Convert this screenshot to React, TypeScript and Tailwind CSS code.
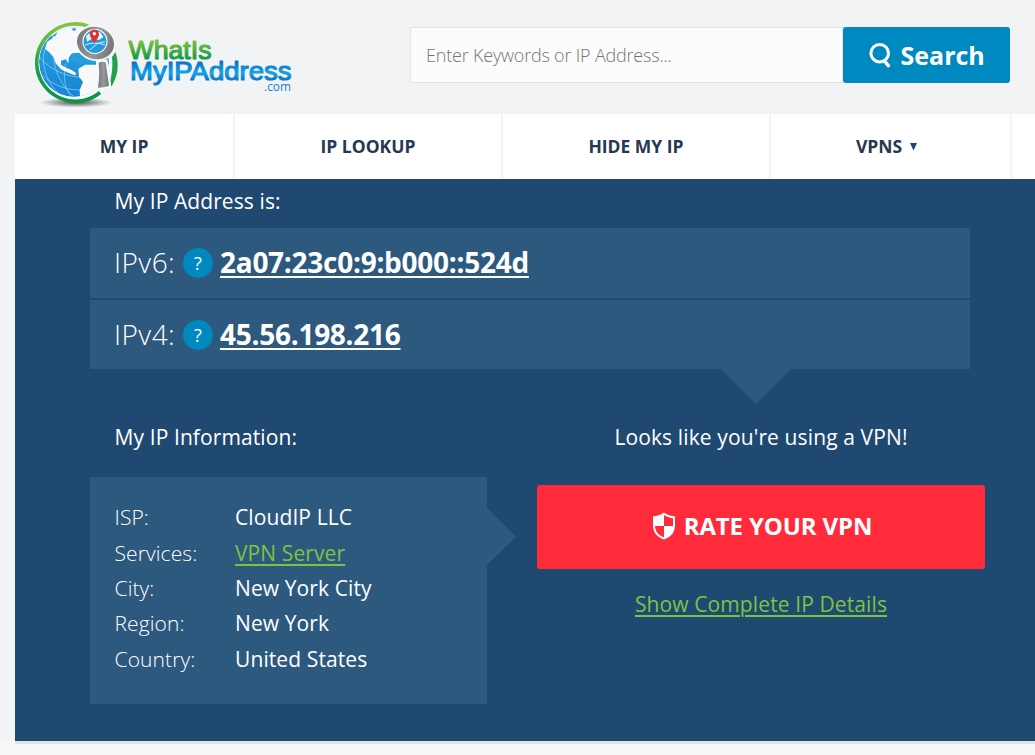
import React from "react";

const navItems = [
  { label: "MY IP", width: "w-[220px]", pad: "pr-0" },
  { label: "IP LOOKUP", width: "w-[268px]", pad: "pr-0" },
  { label: "HIDE MY IP", width: "w-[268px]", pad: "pr-0" },
  { label: "VPNS", width: "w-[241px]", pad: "pr-2", caret: true },
];

const addresses = [
  { label: "IPv6:", value: "2a07:23c0:9:b000::524d", height: "h-[70px]" },
  { label: "IPv4:", value: "45.56.198.216", height: "h-[69px]" },
];

const details = [
  { label: "ISP:", value: "CloudIP LLC", row: "h-[36px]" },
  { label: "Services:", value: "VPN Server", row: "h-[35px]", link: true },
  { label: "City:", value: "New York City", row: "h-[35px]" },
  { label: "Region:", value: "New York", row: "h-[36px]" },
  { label: "Country:", value: "United States", row: "h-[35px]" },
];

function Logo() {
  return (
    <svg width="285" height="110" viewBox="0 0 285 110" className="block shrink-0">
      <defs>
        <linearGradient id="ring" x1="0" y1="0" x2="0" y2="1">
          <stop offset="0" stopColor="#84c441" />
          <stop offset="0.6" stopColor="#189f48" />
          <stop offset="1" stopColor="#0a9444" />
        </linearGradient>
        <linearGradient id="ocean" x1="0" y1="0" x2="0" y2="1">
          <stop offset="0" stopColor="#2aa7e6" />
          <stop offset="1" stopColor="#1585d3" />
        </linearGradient>
        <linearGradient id="metal" x1="0" y1="0" x2="1" y2="0">
          <stop offset="0" stopColor="#77797c" />
          <stop offset="0.5" stopColor="#96989b" />
          <stop offset="1" stopColor="#737578" />
        </linearGradient>
        <linearGradient id="greenText" gradientUnits="userSpaceOnUse" x1="0" y1="39" x2="0" y2="59">
          <stop offset="0" stopColor="#86c440" />
          <stop offset="1" stopColor="#129a47" />
        </linearGradient>
        <linearGradient id="blueText" gradientUnits="userSpaceOnUse" x1="0" y1="61" x2="0" y2="86">
          <stop offset="0" stopColor="#0b6dbd" />
          <stop offset="0.48" stopColor="#12a3e6" />
          <stop offset="0.8" stopColor="#0b70c0" />
          <stop offset="1" stopColor="#1288d2" />
        </linearGradient>
        <radialGradient id="shadow">
          <stop offset="0" stopColor="#333" stopOpacity="0.85" />
          <stop offset="1" stopColor="#333" stopOpacity="0" />
        </radialGradient>
        <clipPath id="globe">
          <circle cx="147" cy="156" r="105" />
        </clipPath>
      </defs>
      <ellipse cx="61" cy="102.500" rx="36" ry="5" fill="url(#shadow)" />
      <circle cx="60.4" cy="62.6" r="39.5" fill="#f7f9fa" />
      <g transform="translate(10 10) scale(.33333)">
        <g clipPath="url(#globe)">
          <circle cx="147" cy="156" r="105" fill="url(#ocean)" />
          <g fill="none" stroke="#8fd0f2" strokeWidth="2.2">
            <path d="M42 140C80 185 140 210 215 200M52 195C95 235 150 248 200 235M88 95C75 150 100 225 150 262M122 160C112 205 122 240 140 262M62 115C45 150 60 215 105 255" />
          </g>
          <path
            d="M60 116L66 96L84 84L78 70L100 44L140 40L185 48L170 80L160 105L164 128L142 130L132 142L130 160L122 148L108 152L108 164L120 172L140 180L154 190L150 196L130 188L108 178L92 160L86 142L74 128Z"
            fill="#f7f9fa"
          />
          <path d="M160 176L180 164L214 164L250 168L262 230L205 268L165 262L164 240L174 216L162 200Z" fill="#f7f9fa" />
          <path d="M136 134L156 128L168 140L186 148L212 151L212 160L180 158L166 166L152 156L140 158Z" fill="#279edd" />
          <path d="M76 82L98 66L92 78ZM140 56L150 54L154 60L146 63Z" fill="#2a9fe0" />
        </g>
      </g>
      <path d="M73.3 26.1A38.700 38.700 0 1 0 85 92.500" fill="none" stroke="url(#ring)" strokeWidth="3.600" />
      <path d="M95.500 88A42 42 0 0 0 100.500 52L97 57C98.200 68 96.500 78 93 88Z" fill="#20a14a" />
      <path d="M81 60L92.500 59.500L96.500 88L81.500 90.500Z" fill="#f8f9fa" />
      <path d="M83.600 62.800Q87 61 90.700 62.300L94 86Q89 87.700 83 87.700Q85 74 83.600 62.800Z" fill="url(#metal)" />
      <ellipse cx="80.500" cy="43" rx="20.500" ry="18" fill="#f5f7f8" transform="rotate(16 80.500 43)" />
      <ellipse cx="80.500" cy="43" rx="18.700" ry="16" fill="url(#metal)" transform="rotate(16 80.500 43)" />
      <circle cx="80" cy="41.300" r="12.600" fill="#f4f7f9" />
      <circle cx="80" cy="41.500" r="11.400" fill="#2499dc" />
      <path d="M71 36Q77 30 85 32L88.500 37L84 40L77 38.500L72 42Z" fill="#dff1fa" />
      <path d="M70 45Q80 41 90 45M75 50Q83 41 90 42" fill="none" stroke="#d4effc" strokeWidth="1" />
      <path d="M79.500 43.500C77.500 39 74.800 37.500 74.800 34A4.600 4.600 0 0 1 84 34C84 37.500 81.500 39 79.500 43.500Z" fill="#e4322b" />
      <circle cx="79.300" cy="33.800" r="1.700" fill="#fff" />
      <text x="113.5" y="58.5" fontFamily="Liberation Sans, Arial, sans-serif" fontSize="25.5" fill="url(#greenText)" stroke="url(#greenText)" strokeWidth="1.1" strokeLinejoin="round" textLength="83" lengthAdjust="spacingAndGlyphs">WhatIs</text>
      <text x="115" y="80" fontFamily="Liberation Sans, Arial, sans-serif" fontSize="25" fill="url(#blueText)" stroke="url(#blueText)" strokeWidth="1.1" strokeLinejoin="round" textLength="161.500" lengthAdjust="spacingAndGlyphs">MyIPAddress</text>
      <text x="249" y="91" fontFamily="Open Sans, sans-serif" fontSize="12" fill="#147fc5" textLength="27" lengthAdjust="spacingAndGlyphs">.com</text>
    </svg>
  );
}

function HelpBadge() {
  return (
    <span className="ml-2 mr-[7px] flex size-[30px] shrink-0 items-center justify-center rounded-full bg-[#0089c0] text-[18px] leading-none text-white">
      ?
    </span>
  );
}

export default function App() {
  return (
    <div className="h-[755px] w-[1035px] overflow-hidden bg-[#f7f7f7] font-['Open_Sans',sans-serif]">
      <div className="bg-[#f1f3f5] pl-[15px]">
        <header className="flex h-[114px] items-start">
          <Logo />
          <form className="ml-[110px] mt-[27px] flex h-14 w-[600px]">
            <input
              placeholder="Enter Keywords or IP Address..."
              className="h-14 w-[433px] border border-[#e4e4e4] bg-[#fcfcfc] px-[15px] text-[18px] font-light tracking-[-0.2px] text-black outline-none placeholder:text-[#757575]"
            />
            <button
              type="button"
              className="flex h-14 w-[167px] items-center rounded-[3px] bg-[#0089c0] pl-[26px] text-[25px] font-bold text-white"
            >
              <svg width="24" height="28" viewBox="0 0 24 28" fill="none" stroke="#fff" className="mr-[7.5px] mt-0.5">
                <circle cx="10.700" cy="11.200" r="8.800" strokeWidth="3" />
                <path d="M15.500 19L19.500 23.800" strokeWidth="3.400" strokeLinecap="round" />
              </svg>
              <span className="pt-0.5">Search</span>
            </button>
          </form>
        </header>
        <nav className="flex h-[65px] w-[1020px] overflow-hidden bg-white">
          {navItems.map((item) => (
            <a
              key={item.label}
              className={`${item.width} ${item.pad} flex shrink-0 items-center justify-center border-r-2 border-[#f3f4f5] text-[17.5px] font-bold text-[#253850]`}
            >
              {item.label}
              {item.caret && (
                <svg width="7" height="8" viewBox="0 0 7 8" className="ml-2 mt-px">
                  <path d="M0 0H7L3.5 7.5Z" fill="#1f4971" />
                </svg>
              )}
            </a>
          ))}
        </nav>
        <main className="h-[562px] w-[1020px] bg-[#1f4971] pl-[75px] text-white">
          <h2 className="h-[49px] pl-[24.5px] pt-[6px] text-[21px] leading-[32px] tracking-[0.1px]">My IP Address is:</h2>
          <section className="relative flex w-[880px] flex-col gap-0.5">
            {addresses.map((a) => (
              <div key={a.label} className={`${a.height} flex items-center bg-[#2d597f] pl-[24px] text-[28px]`}>
                <span className="-mt-0.5 w-[61px] whitespace-nowrap font-light tracking-[0.45px]">{a.label}</span>
                <HelpBadge />
                <a className="-mt-0.5 font-bold tracking-[-0.27px] underline decoration-2 underline-offset-[3px] [text-decoration-skip-ink:none]">
                  {a.value}
                </a>
              </div>
            ))}
            <svg width="70" height="35" viewBox="0 0 70 35" className="absolute left-[631px] top-full">
              <path d="M0 0H70L35 35Z" fill="#2d597f" />
            </svg>
          </section>
          <div className="flex">
            <section className="w-[397px]">
              <h2 className="h-[108px] pl-[24.5px] pt-[52px] text-[21px] leading-[32px] tracking-[0.1px]">My IP Information:</h2>
              <div className="relative h-[227px] bg-[#2d597f] pl-[24.5px] pt-[23px]">
                {details.map((d) => (
                  <div key={d.label} className={`${d.row} flex text-[21px] leading-[35px] tracking-[0.1px]`}>
                    <span className="w-[120.5px] font-light">{d.label}</span>
                    {d.link ? (
                      <a className="text-[#7fc241] underline decoration-2 underline-offset-[3px]">{d.value}</a>
                    ) : (
                      <span className="font-medium">{d.value}</span>
                    )}
                  </div>
                ))}
                <svg width="29" height="58" viewBox="0 0 29 58" className="absolute left-full top-[31px]">
                  <path d="M0 0L29 28.5L0 57Z" fill="#2d597f" />
                </svg>
              </div>
            </section>
            <section className="ml-[50px] flex w-[448px] flex-col items-center">
              <h2 className="h-[116px] pt-[52px] text-[21px] leading-[32px] tracking-[0.12px]">Looks like you're using a VPN!</h2>
              <button
                type="button"
                className="flex h-[84px] w-[448px] items-center justify-center rounded-[3px] bg-[#ff2b3a] pl-0.5 text-[24px] font-bold tracking-[-0.15px]"
              >
                <svg width="24" height="28" viewBox="0 0 24 28" className="-mt-0.5 mr-2">
                  <path
                    fillRule="evenodd"
                    fill="#fff"
                    d="M12 0.5C15.5 3 19 4.2 23 4.3V13C23 20.5 19 25 12 27.5C5 25 1 20.5 1 13V4.3C5 4.2 8.500 3 12 0.500ZM12 3V14H3C3.500 20 6.500 23.500 12 25.300V14H21V6.200C17.500 5.800 14.700 4.700 12 3Z"
                  />
                </svg>
                <span className="-mt-0.5">RATE YOUR VPN</span>
              </button>
              <a className="mt-[19px] text-[21px] leading-[32px] tracking-[0.11px] text-[#7fc241] underline decoration-2 underline-offset-[3px]">
                Show Complete IP Details
              </a>
            </section>
          </div>
        </main>
      </div>
      <div className="ml-[15px] h-[3px] bg-[#e2e4ea]" />
    </div>
  );
}
